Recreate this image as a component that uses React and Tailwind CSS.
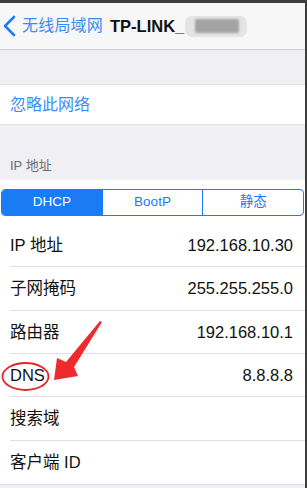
import React from "react";

const rows = [
  { label: "IP 地址", value: "192.168.10.30", h: "h-[43px]" },
  { label: "子网掩码", value: "255.255.255.0", h: "h-[44px]" },
  { label: "路由器", value: "192.168.10.1", h: "h-[43px]" },
  { label: "DNS", value: "8.8.8.8", h: "h-[43px]" },
  { label: "搜索域", value: "", h: "h-[44px]" },
  { label: "客户端 ID", value: "", h: "h-[43px]" },
];

const font = "font-['Liberation_Sans','Noto_Sans_CJK_SC',sans-serif]";

export default function App() {
  return (
    <div className="w-[307px] h-[488px] bg-[#3d3d3d] pt-[3px] pr-[2px] overflow-hidden">
      <div className={`relative h-full bg-[#efeff4] ${font}`}>
        {/* Nav bar */}
        <div className="h-[47px] bg-[#f7f7f7] border-b border-[#cfcfd2] flex items-center">
          <svg width="20" height="24" viewBox="0 0 20 24" className="ml-[1px] -mt-[1px]">
            <path d="M13 3 L4 12 L13 21" fill="none" stroke="#1f7cf2" strokeWidth="2.6" strokeLinecap="round" strokeLinejoin="round" />
          </svg>
          <span className="ml-[1px] text-[16px] text-[#3b8cf2] tracking-[0.2px]">无线局域网</span>
          <span className="ml-[7px] text-[16.5px] font-semibold text-[#111]">TP-LINK_</span>
          {/* blurred SSID */}
          <div className="ml-[1px] w-[62px] h-[21px] rounded-[7px] bg-[#e4e4e4] flex items-center justify-end pr-[8px]">
            <div className="w-[44px] h-[14px] bg-[#a3a3a3] rounded-[2px] blur-[1px]" />
          </div>
        </div>

        {/* Forget network */}
        <div className="mt-[34px] h-[41px] bg-white border-y border-[#e2e2e6] flex items-center px-[10px]">
          <span className="text-[16px] text-[#3b8cf2]">忽略此网络</span>
        </div>

        {/* Section label */}
        <div className="h-[55px] flex items-end pb-[5px] px-[10px]">
          <span className="text-[13px] text-[#6d6d72]">IP 地址</span>
        </div>

        {/* IP section */}
        <div className="bg-white border-b border-[#dcdce0]">
          <div className="h-[44px] flex items-center px-[1px]">
            <div className="flex w-full h-[27px] border border-[#1a7cf5] rounded-[4px] overflow-hidden text-[13.5px]">
              <div className="flex-1 bg-[#1a7cf5] text-white flex items-center justify-center">DHCP</div>
              <div className="flex-1 border-l border-[#1a7cf5] text-[#1a7cf5] flex items-center justify-center">BootP</div>
              <div className="flex-1 border-l border-[#1a7cf5] text-[#1a7cf5] flex items-center justify-center">静态</div>
            </div>
          </div>
          {rows.map((r, i) => (
            <div key={r.label} className={`${r.h} flex items-center pl-[10px]`}>
              <div
                className={`flex-1 h-full flex items-center justify-between pr-[12px] ${
                  i < rows.length - 1 ? "border-b border-[#e0e0e4]" : ""
                }`}
              >
                <span className="text-[16.5px] text-[#111]">{r.label}</span>
                <span className="text-[16.5px] text-[#111]">{r.value}</span>
              </div>
            </div>
          ))}
        </div>

        {/* Red annotation */}
        <svg
          className="absolute left-0 top-0 pointer-events-none"
          width="305"
          height="485"
          viewBox="0 0 305 485"
        >
          <ellipse cx="25.5" cy="373.5" rx="23" ry="13.5" fill="none" stroke="#e8242b" strokeWidth="1.8" />
          <path d="M102 319 L74 364 L78 373 L54 377 L57 355 L66 359 L100 318 Z" fill="#ee2a2f" />
        </svg>
      </div>
    </div>
  );
}
